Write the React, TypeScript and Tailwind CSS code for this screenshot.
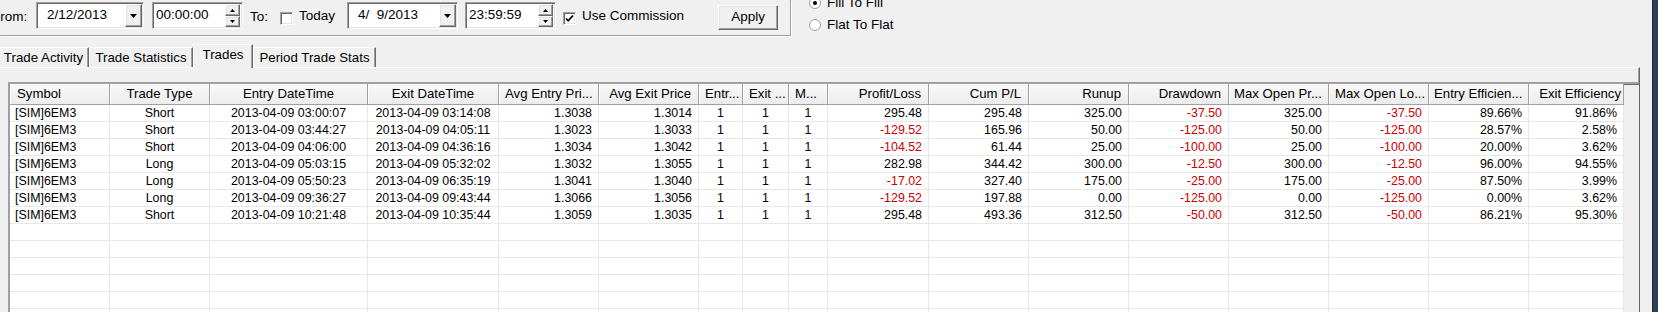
import React from "react";

const cols = [
  { h: "Symbol", w: "w-[100px]", ha: "text-left pl-[7px]", da: "text-left pl-[5px]" },
  { h: "Trade Type", w: "w-[100px]", ha: "text-center", da: "text-center" },
  { h: "Entry DateTime", w: "w-[158px]", ha: "text-center", da: "text-center" },
  { h: "Exit DateTime", w: "w-[131px]", ha: "text-center", da: "text-center" },
  { h: "Avg Entry Pri...", w: "w-[100px]", ha: "text-left pl-[6px]", da: "text-right pr-[6px]" },
  { h: "Avg Exit Price", w: "w-[100px]", ha: "text-right pr-[7px]", da: "text-right pr-[6px]" },
  { h: "Entr...", w: "w-[44px]", ha: "text-left pl-[6px]", da: "text-center" },
  { h: "Exit ...", w: "w-[46px]", ha: "text-left pl-[6px]", da: "text-center" },
  { h: "M...", w: "w-[39px]", ha: "text-left pl-[6px]", da: "text-center" },
  { h: "Profit/Loss", w: "w-[101px]", ha: "text-right pr-[7px]", da: "text-right pr-[6px]" },
  { h: "Cum P/L", w: "w-[100px]", ha: "text-right pr-[7px]", da: "text-right pr-[6px]" },
  { h: "Runup", w: "w-[100px]", ha: "text-right pr-[7px]", da: "text-right pr-[6px]" },
  { h: "Drawdown", w: "w-[100px]", ha: "text-right pr-[7px]", da: "text-right pr-[6px]" },
  { h: "Max Open Pr...", w: "w-[100px]", ha: "text-left pl-[5px]", da: "text-right pr-[6px]" },
  { h: "Max Open Lo...", w: "w-[100px]", ha: "text-left pl-[6px]", da: "text-right pr-[6px]" },
  { h: "Entry Efficien...", w: "w-[100px]", ha: "text-left pl-[5px]", da: "text-right pr-[6px]" },
  { h: "Exit Efficiency", w: "w-[95px]", ha: "text-right pr-[2px]", da: "text-right pr-[6px]" },
];

const trades = [
  ["[SIM]6EM3", "Short", "2013-04-09 03:00:07", "2013-04-09 03:14:08", "1.3038", "1.3014", "1", "1", "1", "295.48", "295.48", "325.00", "-37.50", "325.00", "-37.50", "89.66%", "91.86%"],
  ["[SIM]6EM3", "Short", "2013-04-09 03:44:27", "2013-04-09 04:05:11", "1.3023", "1.3033", "1", "1", "1", "-129.52", "165.96", "50.00", "-125.00", "50.00", "-125.00", "28.57%", "2.58%"],
  ["[SIM]6EM3", "Short", "2013-04-09 04:06:00", "2013-04-09 04:36:16", "1.3034", "1.3042", "1", "1", "1", "-104.52", "61.44", "25.00", "-100.00", "25.00", "-100.00", "20.00%", "3.62%"],
  ["[SIM]6EM3", "Long", "2013-04-09 05:03:15", "2013-04-09 05:32:02", "1.3032", "1.3055", "1", "1", "1", "282.98", "344.42", "300.00", "-12.50", "300.00", "-12.50", "96.00%", "94.55%"],
  ["[SIM]6EM3", "Long", "2013-04-09 05:50:23", "2013-04-09 06:35:19", "1.3041", "1.3040", "1", "1", "1", "-17.02", "327.40", "175.00", "-25.00", "175.00", "-25.00", "87.50%", "3.99%"],
  ["[SIM]6EM3", "Long", "2013-04-09 09:36:27", "2013-04-09 09:43:44", "1.3066", "1.3056", "1", "1", "1", "-129.52", "197.88", "0.00", "-125.00", "0.00", "-125.00", "0.00%", "3.62%"],
  ["[SIM]6EM3", "Short", "2013-04-09 10:21:48", "2013-04-09 10:35:44", "1.3059", "1.3035", "1", "1", "1", "295.48", "493.36", "312.50", "-50.00", "312.50", "-50.00", "86.21%", "95.30%"],
];

const emptyRows = [0, 1, 2, 3, 4, 5];

const sunken =
  "border border-t-[#a0a0a0] border-l-[#a0a0a0] border-b-white border-r-white shadow-[inset_1px_1px_0_#696969,inset_-1px_-1px_0_#e3e3e3]";
const raised =
  "border border-t-white border-l-white border-b-[#696969] border-r-[#696969] shadow-[inset_-1px_-1px_0_#a0a0a0,inset_1px_1px_0_#e3e3e3] bg-[#f0f0f0]";

function DropButton() {
  return (
    <div className={`${raised} w-[17px] h-[23px] flex items-center justify-center`}>
      <svg width="7" height="4" viewBox="0 0 7 4">
        <path d="M0 0h7L3.5 4z" fill="#000" />
      </svg>
    </div>
  );
}

function Spinner() {
  return (
    <div className="flex flex-col w-[15px] h-[23px]">
      <div className={`${raised} h-[12px] flex items-center justify-center`}>
        <svg width="5" height="3" viewBox="0 0 5 3">
          <path d="M2.5 0L5 3H0z" fill="#000" />
        </svg>
      </div>
      <div className={`${raised} h-[11px] flex items-center justify-center`}>
        <svg width="5" height="3" viewBox="0 0 5 3">
          <path d="M0 0h5L2.5 3z" fill="#000" />
        </svg>
      </div>
    </div>
  );
}

function DateBox({ value, width }: { value: string; width: string }) {
  return (
    <div className={`${sunken} bg-white h-[27px] ${width} flex items-center justify-between pl-[10px] pr-[1px]`}>
      <span className="whitespace-pre">{value}</span>
      <DropButton />
    </div>
  );
}

function TimeBox({ value }: { value: string }) {
  return (
    <div className={`${sunken} bg-white h-[27px] w-[91px] flex items-center justify-between pl-[3px] pr-[2px]`}>
      <span>{value}</span>
      <Spinner />
    </div>
  );
}

function CheckBox({ checked }: { checked?: boolean }) {
  return (
    <div className={`${sunken} bg-white w-[13px] h-[13px] flex items-center justify-center`}>
      {checked && (
        <svg width="9" height="9" viewBox="0 0 9 9">
          <path d="M1 4.5l2.2 2.3L8 1.5" stroke="#000" strokeWidth="1.8" fill="none" />
        </svg>
      )}
    </div>
  );
}

function Radio({ checked }: { checked?: boolean }) {
  return (
    <div className="w-[12px] h-[12px] rounded-full bg-white border border-[#a0a0a0] flex items-center justify-center">
      {checked && <div className="w-[4px] h-[4px] rounded-full bg-black" />}
    </div>
  );
}

function Tab({ label, width, active }: { label: string; width: string; active?: boolean }) {
  return (
    <div
      className={`${width} ${
        active ? "h-[24px] -mb-[1px] relative z-10 pb-[3px]" : "h-[20px]"
      } shrink-0 flex items-center justify-center bg-[#f0f0f0] border-t border-l border-t-white border-l-white border-r border-r-[#696969] shadow-[inset_-1px_0_0_#a0a0a0] text-[13.3px]`}
    >
      {label}
    </div>
  );
}

export default function App() {
  return (
    <div className="w-[1658px] h-[312px] overflow-hidden bg-[#f0f0f0] flex font-['Liberation_Sans',Arial,sans-serif] text-black">
      <div className="w-[1652px] h-full flex flex-col">
        {/* filter bar */}
        <div className="h-[44px] shrink-0 flex items-start">
          <div className="w-[791px] h-[36px] border-r border-b border-r-[#a0a0a0] border-b-[#a0a0a0] shadow-[1px_1px_0_#fff] flex items-start pt-[2px] text-[13.5px]">
            <span className="-ml-[8px] mt-[5px] w-[44px]">From:</span>
            <DateBox value="2/12/2013" width="w-[108px]" />
            <div className="ml-[8px]">
              <TimeBox value="00:00:00" />
            </div>
            <span className="ml-[7px] mt-[5px]">To:</span>
            <div className="ml-[12px] mt-[10px]">
              <CheckBox />
            </div>
            <span className="ml-[6px] mt-[4px]">Today</span>
            <div className="ml-[12px]">
              <DateBox value="4/  9/2013" width="w-[111px]" />
            </div>
            <div className="ml-[7px]">
              <TimeBox value="23:59:59" />
            </div>
            <div className="ml-[7px] mt-[10px]">
              <CheckBox checked />
            </div>
            <span className="ml-[6px] mt-[4px]">Use Commission</span>
            <button className={`${raised} ml-[34px] mt-[3px] w-[60px] h-[25px] text-[13.5px]`}>Apply</button>
          </div>
          <div className="ml-[18px] -mt-[8px] flex flex-col text-[13.5px]">
            <div className="h-[22px] flex items-center gap-[6px]">
              <Radio checked />
              <span>Fill To Fill</span>
            </div>
            <div className="h-[22px] flex items-center gap-[6px]">
              <Radio />
              <span>Flat To Flat</span>
            </div>
          </div>
        </div>

        {/* tabs */}
        <div className="h-[23px] shrink-0 flex items-end -ml-[2px]">
          <Tab label="Trade Activity" width="w-[91px]" />
          <Tab label="Trade Statistics" width="w-[104px]" />
          <Tab label="Trades" width="w-[60px]" active />
          <Tab label="Period Trade Stats" width="w-[123px]" />
        </div>

        {/* panel */}
        <div className="w-[1640px] flex-1 min-h-0 overflow-hidden border-t border-t-white border-r border-r-[#696969] shadow-[inset_-1px_0_0_#a0a0a0] pt-[14px] pl-[8px]">
          <div className="h-full border-t-2 border-l-2 border-t-[#a0a0a0] border-l-[#a0a0a0] shadow-[inset_1px_1px_0_#696969] bg-[#f0f0f0] overflow-hidden">
            <div className="flex h-[21px] w-[1614px]">
              {cols.map((c) => (
                <div
                  key={c.h}
                  className={`${c.w} ${c.ha} shrink-0 h-full leading-[20px] text-[13.2px] whitespace-nowrap overflow-hidden bg-gradient-to-b from-[#f9f9f9] to-[#ececec] border-r border-r-[#a0a0a0] border-b border-b-[#a0a0a0] shadow-[inset_1px_1px_0_#fff]`}
                >
                  {c.h}
                </div>
              ))}
            </div>
            {trades.map((r, i) => (
              <div key={i} className="flex h-[17px] w-[1614px] bg-white">
                {r.map((v, j) => (
                  <div
                    key={j}
                    className={`${cols[j].w} ${cols[j].da} ${
                      v.startsWith("-") ? "text-[#c80000]" : "text-black"
                    } shrink-0 h-full leading-[16px] text-[12.4px] whitespace-nowrap overflow-hidden border-r border-b border-[#e8e8e8]`}
                  >
                    {v}
                  </div>
                ))}
              </div>
            ))}
            {emptyRows.map((i) => (
              <div key={`e${i}`} className="flex h-[17px] w-[1614px] bg-white">
                {cols.map((c) => (
                  <div key={c.h} className={`${c.w} shrink-0 h-full border-r border-b border-[#e8e8e8]`} />
                ))}
              </div>
            ))}
          </div>
        </div>
      </div>
      <div className="w-[6px] h-full bg-[#2e4057] border-l border-l-[#1c2a3a]" />
    </div>
  );
}
